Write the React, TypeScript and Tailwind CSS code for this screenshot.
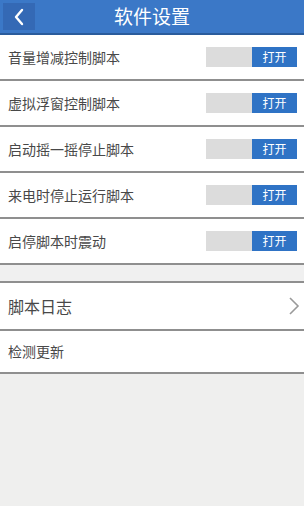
import React, { useState } from 'react';

const settings = [
  '音量增减控制脚本',
  '虚拟浮窗控制脚本',
  '启动摇一摇停止脚本',
  '来电时停止运行脚本',
  '启停脚本时震动',
];

const Toggle = ({ on, onClick }: { on: boolean; onClick: () => void }) => (
  <button onClick={onClick} className="flex h-[20px] w-[91px]">
    <span className="w-[46px] h-full bg-[#dcdcdc]" />
    <span className="flex-1 h-full bg-[#2f73c5] text-white text-[12px] leading-[20px] text-center">
      {on ? '关闭' : '打开'}
    </span>
  </button>
);

const App = () => {
  const [states, setStates] = useState<boolean[]>(settings.map(() => false));

  const toggle = (i: number) => {
    setStates(states.map((s, idx) => (idx === i ? !s : s)));
  };

  return (
    <div
      className="w-[304px] h-[506px] bg-[#efefee] flex flex-col"
      style={{ fontFamily: '"Noto Sans CJK SC", "Noto Sans", sans-serif' }}
    >
      {/* Header */}
      <div className="h-[35px] bg-[#3b78c7] border-b-2 border-[#2a5c9c] flex items-center relative shrink-0">
        <button className="ml-[3px] w-[32px] h-[27px] bg-[#3469b5] flex items-center justify-center">
          <svg width="12" height="18" viewBox="0 0 12 18" fill="none">
            <path d="M9 2 L3 9 L9 16" stroke="white" strokeWidth="2.4" strokeLinecap="round" strokeLinejoin="round" />
          </svg>
        </button>
        <h1 className="absolute inset-0 flex items-center justify-center text-white text-[19px] pointer-events-none">
          软件设置
        </h1>
      </div>

      {/* Switch rows */}
      {settings.map((label, i) => (
        <div key={label} className="h-[46px] bg-white border-b-2 border-[#8f8f8f] flex items-center justify-between pl-[8px] pr-[7px] shrink-0">
          <span className="text-[14px] text-[#484848]">{label}</span>
          <Toggle on={states[i]} onClick={() => toggle(i)} />
        </div>
      ))}

      {/* Spacer strip */}
      <div className="h-[18px] bg-[#f0f0f0] border-b-2 border-[#8f8f8f] shrink-0" />

      {/* Log */}
      <div className="h-[48px] bg-white border-b-2 border-[#8f8f8f] flex items-center justify-between pl-[8px] pr-[4px] shrink-0">
        <span className="text-[16px] text-[#484848]">脚本日志</span>
        <svg width="12" height="20" viewBox="0 0 12 20" fill="none">
          <path d="M2 2 L10 10 L2 18" stroke="#9a9a9a" strokeWidth="1.6" />
        </svg>
      </div>

      {/* Update */}
      <div className="h-[43px] bg-white border-b-2 border-[#8f8f8f] flex items-center pl-[8px] shrink-0">
        <span className="text-[14px] text-[#484848]">检测更新</span>
      </div>
    </div>
  );
};

export default App;
